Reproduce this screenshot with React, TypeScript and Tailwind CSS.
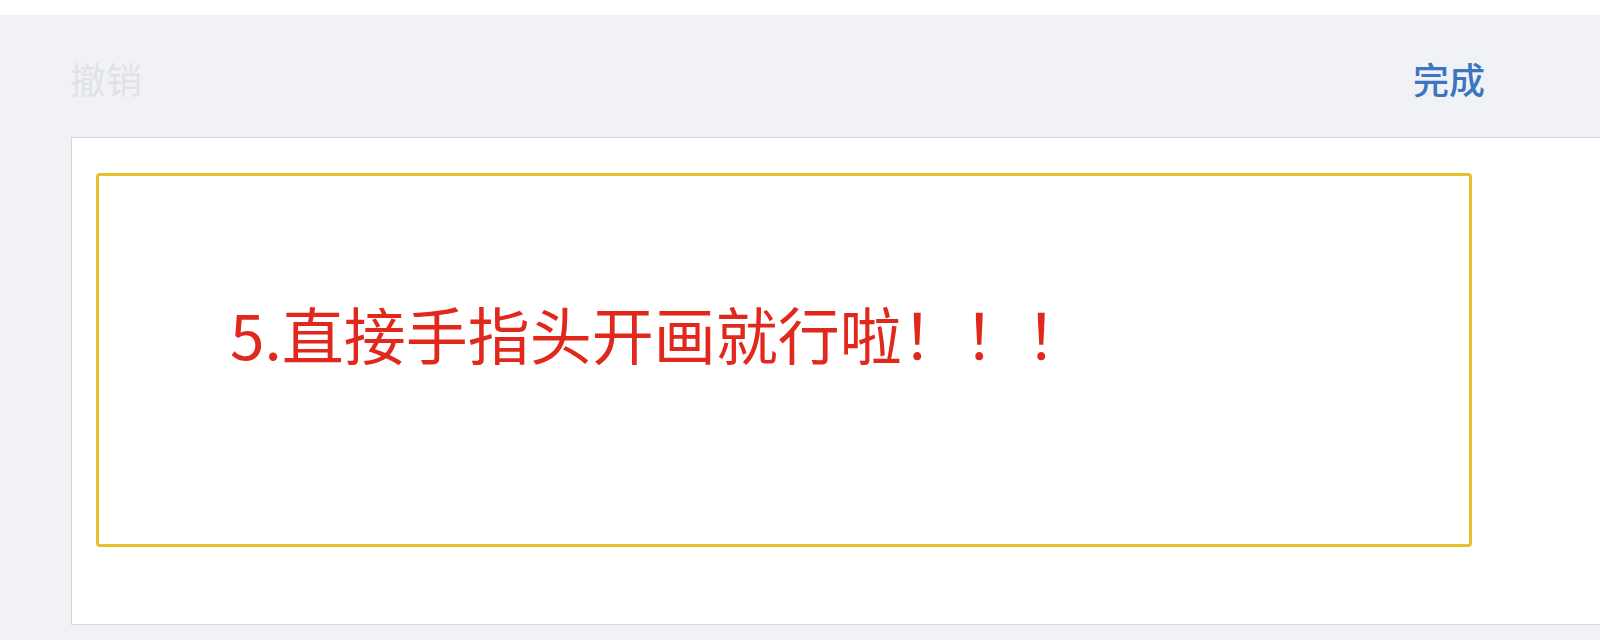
export default function App() {
  const cjk = { fontFamily: '"Noto Sans CJK SC", "Noto Sans", sans-serif' };

  return (
    <div className="h-[640px] w-[1600px] overflow-hidden bg-[#f1f2f6]" style={cjk}>
      <div className="h-[15px] bg-white" />

      <div className="flex h-[122px] items-center justify-between pl-[70px] pr-[115px] pt-[3px]">
        <button className="text-[36px] leading-none text-[#e0e2e6]">撤销</button>
        <button className="text-[36px] font-medium leading-none text-[#3a76c2]">完成</button>
      </div>

      <div className="ml-[71px] h-[488px] border border-r-0 border-[#d5d6da] bg-white pl-[24px] pt-[35px]">
        <div className="h-[374px] w-[1376px] rounded-[4px] border-[3px] border-[#e6bf2c] pl-[131px] pt-[126px]">
          <p className="text-[62px] leading-none text-[#e1281d]">5.直接手指头开画就行啦！！！</p>
        </div>
      </div>
    </div>
  );
}
